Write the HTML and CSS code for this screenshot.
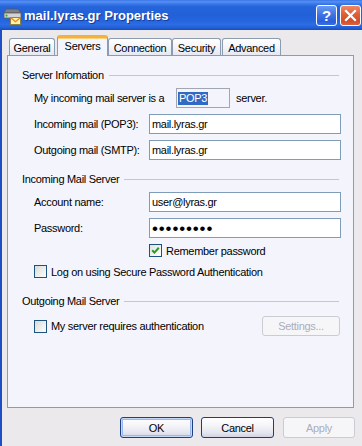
FILE: index.html
```html
<!DOCTYPE html>
<html>
<head>
<meta charset="utf-8">
<title>mail.lyras.gr Properties</title>
<link rel="stylesheet" href="styles.css">
</head>
<body>
<div class="window">
  <div class="titlebar">
    <svg class="app-icon" width="18" height="18" viewBox="0 0 18 18">
      <polygon points="3,2 15,2 18,6 1,6" fill="#7d7f86" stroke="#55575c" stroke-width="0.8"/>
      <rect x="1" y="6" width="17" height="5" fill="#d2d3d6" stroke="#5d5f64" stroke-width="0.8"/>
      <circle cx="3.5" cy="8.6" r="1.1" fill="#25b825"/>
      <rect x="7.5" y="10.5" width="10" height="7" fill="#fff3a0" stroke="#8c7c3c" stroke-width="0.9"/>
      <polyline points="7.5,10.5 12.5,14.6 17.5,10.5" fill="none" stroke="#e0862a" stroke-width="1.2"/>
    </svg>
    <span class="title">mail.lyras.gr Properties</span>
    <div class="title-buttons">
      <div class="tb tb-help">?</div>
      <div class="tb tb-close">
        <svg width="19" height="19" viewBox="0 0 19 19"><path d="M5 5 L14 14 M14 5 L5 14" stroke="#fff" stroke-width="2.2" stroke-linecap="square"/></svg>
      </div>
    </div>
  </div>

  <div class="body">
    <div class="tabs">
      <div class="tab tab-general">General</div>
      <div class="tab tab-servers selected">Servers</div>
      <div class="tab tab-connection">Connection</div>
      <div class="tab tab-security">Security</div>
      <div class="tab tab-advanced">Advanced</div>
    </div>

    <div class="panel">
      <div class="group-header"><span>Server Infomation</span><i class="rule"></i></div>
      <div class="rows rows-first">
        <div class="row">
          <span class="lbl lbl-type">My incoming mail server is a</span>
          <span class="type-box"><span class="sel">POP3</span></span>
          <span class="suffix">server.</span>
        </div>
        <div class="row">
          <span class="lbl">Incoming mail (POP3):</span>
          <span class="field">mail.lyras.gr</span>
        </div>
        <div class="row">
          <span class="lbl">Outgoing mail (SMTP):</span>
          <span class="field">mail.lyras.gr</span>
        </div>
      </div>

      <div class="group-header gh-2"><span>Incoming Mail Server</span><i class="rule"></i></div>
      <div class="rows rows-first">
        <div class="row">
          <span class="lbl">Account name:</span>
          <span class="field">user@lyras.gr</span>
        </div>
        <div class="row">
          <span class="lbl">Password:</span>
          <span class="field"><span class="dots">•••••••••</span></span>
        </div>
        <div class="check-row check-remember">
          <span class="cbox checked"><svg width="11" height="11" viewBox="0 0 11 11"><path d="M2.2 5.2 L4.4 7.6 L8.8 2.8" fill="none" stroke="#21a121" stroke-width="2"/></svg></span>
          <span class="ctext">Remember password</span>
        </div>
        <div class="check-row check-spa">
          <span class="cbox"></span>
          <span class="ctext">Log on using Secure Password Authentication</span>
        </div>
      </div>

      <div class="group-header gh-3"><span>Outgoing Mail Server</span><i class="rule"></i></div>
      <div class="row row-auth">
        <span class="cbox"></span>
        <span class="ctext">My server requires authentication</span>
        <span class="btn disabled btn-settings">Settings...</span>
      </div>
    </div>

    <div class="actions">
      <span class="btn btn-ok default">OK</span>
      <span class="btn btn-cancel">Cancel</span>
      <span class="btn btn-apply disabled">Apply</span>
    </div>
  </div>
</div>
</body>
</html>
```

FILE: styles.css
```css
* { box-sizing: border-box; }

html, body {
  margin: 0;
  padding: 0;
}

body {
  width: 362px;
  height: 446px;
  overflow: hidden;
  background: #ebe9ec;
  font-family: "Liberation Sans", Arial, sans-serif;
  font-size: 11px;
  letter-spacing: -0.3px;
  color: #000;
}

.window {
  width: 362px;
  height: 446px;
  display: flex;
  flex-direction: column;
}

/* ---------- title bar ---------- */
.titlebar {
  height: 30px;
  flex: none;
  display: flex;
  align-items: center;
  padding: 0 1px 0 3px;
  background: linear-gradient(to bottom,
    #3a74e6 0%, #5591f2 6%, #3b7bec 12%, #2664da 22%,
    #2260d8 50%, #2565de 70%, #2c6ce4 82%, #2360d6 92%, #1a4cb8 100%);
}

.app-icon { flex: none; margin-top: 1px; }

.title {
  margin-left: 3px;
  color: #fff;
  font-weight: bold;
  font-size: 13px;
  letter-spacing: 0;
  text-shadow: 1px 1px 0 #1a3a98;
  white-space: nowrap;
}

.title-buttons {
  margin-left: auto;
  display: flex;
  gap: 3px;
}

.tb {
  width: 21px;
  height: 21px;
  border: 1px solid #fff;
  border-radius: 3px;
  display: flex;
  align-items: center;
  justify-content: center;
}

.tb-help {
  background: linear-gradient(to bottom, #6b9af2 0%, #3e74e6 45%, #2a5fdc 80%, #3a6ee4 100%);
  color: #fff;
  font-weight: bold;
  font-size: 15px;
  letter-spacing: 0;
  line-height: 1;
}

.tb-close {
  background: linear-gradient(to bottom, #ee8a66 0%, #e0603a 40%, #d04e26 80%, #dc6440 100%);
}

/* ---------- body ---------- */
.body {
  flex: 1;
  border-left: 2px solid #1f4ec4;
  padding: 5px 0 0 5px;
  display: flex;
  flex-direction: column;
}

.tabs {
  height: 21px;
  display: flex;
  align-items: flex-end;
  padding-left: 2px;
  margin-bottom: -1px;
  position: relative;
  z-index: 1;
}

.tab {
  height: 17px;
  margin-bottom: 1px;
  border: 1px solid #8c9cae;
  border-bottom: none;
  border-radius: 3px 3px 0 0;
  background: linear-gradient(to bottom, #ffffff 0%, #f6f7fb 40%, #e6e8f2 100%);
  display: flex;
  align-items: center;
  justify-content: center;
  padding-top: 1px;
  white-space: nowrap;
}

.tab-general { width: 46px; }
.tab-servers { width: 51px; margin-left: 2px; }
.tab-connection { width: 64px; }
.tab-security { width: 49px; }
.tab-advanced { width: 59px; margin-left: 1px; }

.tab.selected {
  height: 21px;
  margin-bottom: 0;
  background: #f4f4fc;
  border-top: 3px solid #f5b042;
  padding-top: 0;
  padding-bottom: 3px;
  box-shadow: inset 0 1px 0 #ffd478;
}

.panel {
  width: 347px;
  height: 353px;
  border: 1px solid #8c9cae;
  background: #f4f4fc;
  padding: 12px 12px 0 14px;
  display: flex;
  flex-direction: column;
}

.group-header {
  height: 14px;
  display: flex;
  align-items: center;
  gap: 5px;
  margin-right: 2px;
  white-space: nowrap;
}

.group-header .rule {
  flex: 1;
  height: 1px;
  background: #c6c6cc;
}

.gh-2 { margin-top: 12px; }
.gh-3 { margin-top: 16px; }

.rows {
  display: flex;
  flex-direction: column;
  gap: 6px;
  padding-left: 12px;
}

.rows-first { margin-top: 6px; }

.row {
  height: 20px;
  display: flex;
  align-items: center;
  white-space: nowrap;
}

.lbl {
  width: 115px;
  flex: none;
}

.lbl-type { width: 142px; }

.type-box {
  width: 54px;
  height: 20px;
  border: 1px solid #a2a6b0;
  display: flex;
  align-items: center;
  padding-left: 1px;
}

.sel {
  background: #316ac5;
  color: #fff;
  height: 13px;
  line-height: 13px;
  padding: 0 1px;
}

.suffix { margin-left: 6px; }

.field {
  width: 192px;
  height: 20px;
  border: 1px solid #7f9db9;
  background: #fff;
  padding-left: 2px;
  display: flex;
  align-items: center;
}

.dots {
  font-size: 17px;
  letter-spacing: 0.85px;
  line-height: 1;
  margin-top: 1px;
}

.check-row {
  height: 13px;
  display: flex;
  align-items: center;
  gap: 3px;
  white-space: nowrap;
}

.check-remember { padding-left: 115px; }
.check-spa { margin-top: 2px; }

.cbox {
  width: 13px;
  height: 13px;
  flex: none;
  border: 1px solid #1c5180;
  background: linear-gradient(135deg, #d8d8d4 0%, #ececea 50%, #fcfcfc 100%);
  display: flex;
  align-items: center;
  justify-content: center;
}

.cbox.checked { background: linear-gradient(135deg, #e2e2de 0%, #f4f4f2 60%, #ffffff 100%); }

.ctext { margin-left: 1px; }

.row-auth {
  margin-top: 8px;
  padding-left: 12px;
  gap: 3px;
}

.btn {
  display: flex;
  align-items: center;
  justify-content: center;
  border: 1px solid #1c3f78;
  border-radius: 3px;
  background: linear-gradient(to bottom, #ffffff 0%, #f6f6fa 35%, #e6e7f0 75%, #d2d4e2 100%);
  white-space: nowrap;
}

.btn.disabled {
  border-color: #cbcbd4;
  background: #f6f6f9;
  color: #acadbb;
}

.btn-settings {
  width: 78px;
  height: 20px;
  margin-left: auto;
  margin-right: 1px;
}

.actions {
  margin-top: 9px;
  display: flex;
  justify-content: flex-end;
  gap: 8px;
  padding-right: 7px;
}

.btn-ok, .btn-cancel { width: 73px; height: 21px; }
.btn-apply { width: 72px; height: 21px; margin-left: 1px; }

.btn.default {
  border-color: #1e3f84;
  box-shadow: inset 0 0 0 1px #c6d8f8, inset 0 0 0 2px #9ab8ee;
}
```
